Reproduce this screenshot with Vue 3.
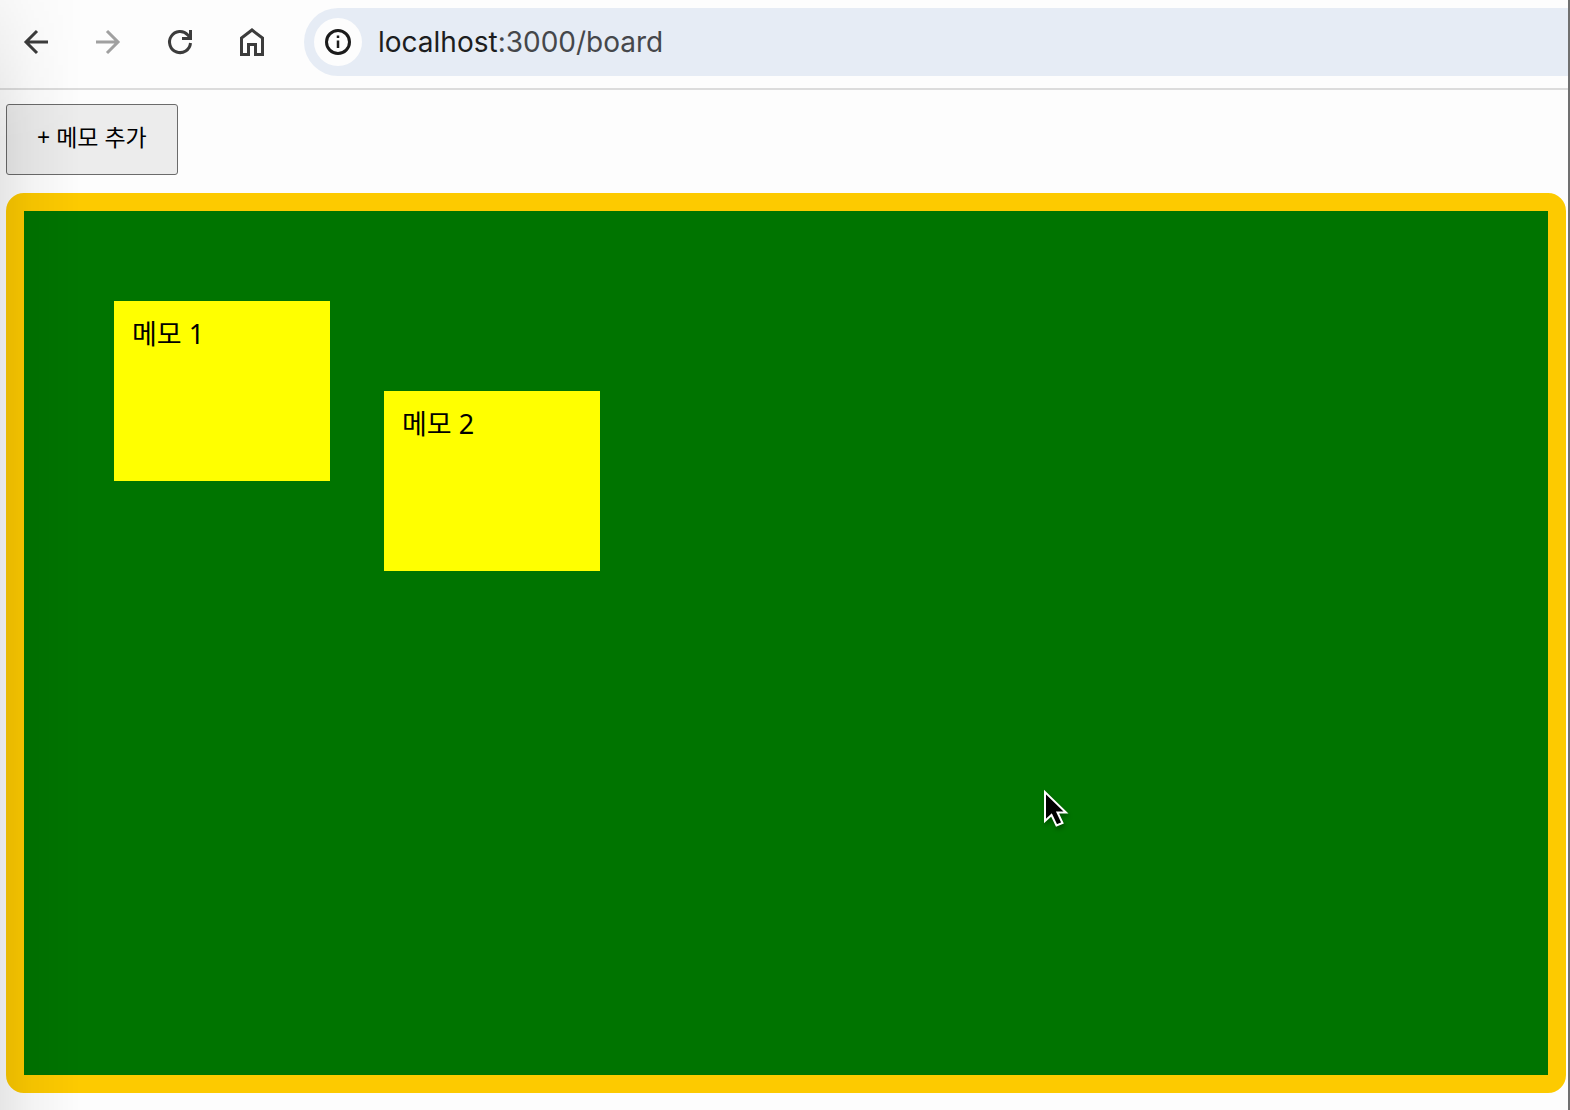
<script setup>
import { ref } from 'vue'

const url = ref('localhost:3000/board')
const notes = ref([
  { id: 1, x: 90, y: 90 },
  { id: 2, x: 360, y: 180 },
])

function addNote() {
  const n = notes.value.length
  notes.value.push({ id: n + 1, x: 90 + n * 270, y: 90 + n * 90 })
}
</script>

<template>
  <div class="window">
    <header class="toolbar">
      <nav class="nav">
        <button type="button" class="nav-button" aria-label="Back">
          <svg viewBox="0 0 36 36"><path d="M30 18H8M19 7 8 18l11 11" /></svg>
        </button>
        <button type="button" class="nav-button forward" aria-label="Forward">
          <svg viewBox="0 0 36 36"><path d="M6 18h22M17 7l11 11-11 11" /></svg>
        </button>
        <button type="button" class="nav-button" aria-label="Reload">
          <svg viewBox="0 0 36 36">
            <path d="M28.5 19A10.5 10.5 0 1 1 25.8 11L29 14.5" />
            <path d="M28.5 6v8.500H20" />
          </svg>
        </button>
        <button type="button" class="nav-button" aria-label="Home">
          <svg viewBox="0 0 36 36">
            <path d="M7.500 30.500V14L18 6l10.500 8v16.500h-7v-10h-7v10z" />
          </svg>
        </button>
      </nav>
      <div class="address">
        <button type="button" class="site-info" aria-label="Site information">
          <svg viewBox="0 0 28 28">
            <circle cx="14" cy="14" r="11.500" />
            <path class="glyph" d="M14 12.500V20M14 7.500v2.500" />
          </svg>
        </button>
        <div class="url"><span class="host">localhost</span>{{ url.slice(9) }}</div>
      </div>
    </header>

    <main class="page">
      <button type="button" class="add" @click="addNote">+ 메모 추가</button>
      <section class="board">
        <article
          v-for="note in notes"
          :key="note.id"
          class="note"
          :style="{ left: note.x + 'px', top: note.y + 'px' }"
        >메모 {{ note.id }}</article>
        <svg class="cursor" viewBox="0 0 28 42" aria-hidden="true">
          <path d="M2 3v29l6.500-6 5 10.500 6-2.500-5-10.500H23z" />
        </svg>
      </section>
    </main>
    <div class="shade"></div>
  </div>
</template>

<style>
body {
  margin: 0;
  background: #fdfdfd;
}
</style>

<style scoped>
.window {
  position: relative;
  box-sizing: border-box;
  min-height: 100vh;
  border-right: 2px solid #707070;
  background: #fdfdfd;
  font-family: "Noto Sans", "Noto Sans CJK KR", sans-serif;
  overflow: hidden;
}

button {
  margin: 0;
  color: #000;
  font-family: inherit;
}

.toolbar {
  display: flex;
  align-items: center;
  gap: 34px;
  height: 88px;
  padding-left: 18px;
  border-bottom: 2px solid #dcdcdc;
}

.nav {
  display: flex;
  gap: 36px;
  margin-bottom: 4px;
}

.nav-button {
  width: 36px;
  height: 36px;
  padding: 0;
  border: 0;
  background: none;
}

.nav-button svg {
  display: block;
  fill: none;
  stroke: #3c3c3c;
  stroke-width: 3;
}

.forward svg {
  stroke: #a0a0a0;
}

.address {
  display: flex;
  flex: 1;
  align-items: center;
  gap: 16px;
  height: 68px;
  margin-bottom: 4px;
  padding-left: 10px;
  border-radius: 34px 0 0 34px;
  background: #e6ecf5;
  box-sizing: border-box;
}

.site-info {
  display: flex;
  align-items: center;
  justify-content: center;
  width: 48px;
  height: 48px;
  padding: 0;
  border: 0;
  border-radius: 50%;
  background: #fdfdfd;
}

.site-info svg {
  width: 28px;
  height: 28px;
  fill: none;
  stroke: #1b1b1b;
  stroke-width: 3;
}

.site-info .glyph {
  stroke-width: 2.5;
}

.url {
  color: #45474b;
  font: 28px/34px Inter, sans-serif;
}

.host {
  color: #1c1d20;
}

.page {
  padding: 14px 2px 17px 6px;
}

.add {
  display: block;
  height: 71px;
  margin-bottom: 18px;
  padding: 0 30px 5px;
  border: 1px solid #6b6b6b;
  border-radius: 3px;
  background: #ececec;
  font-size: 23px;
  line-height: 34px;
}

.board {
  position: relative;
  box-sizing: border-box;
  height: calc(100vh - 210px);
  border: 18px solid #fdca00;
  border-radius: 18px;
  background: #007400;
}

.note {
  position: absolute;
  box-sizing: border-box;
  width: 216px;
  height: 180px;
  padding: 17px 18px;
  background: #ff0;
  color: #000;
  font-size: 27px;
  line-height: 32px;
}

.cursor {
  position: absolute;
  left: 1019px;
  top: 578px;
  width: 28px;
  height: 42px;
  fill: #000;
  stroke: #fff;
  stroke-width: 2;
  filter: drop-shadow(1px 3px 2px rgba(0, 0, 0, 0.3));
}

.shade {
  position: absolute;
  inset: 0 auto 0 0;
  width: 80px;
  background: linear-gradient(to right, rgba(0, 0, 0, 0.09), rgba(0, 0, 0, 0.04) 40%, transparent);
  mask-image: linear-gradient(to bottom, rgba(0, 0, 0, 0.3), #000 140px);
  pointer-events: none;
}
</style>
